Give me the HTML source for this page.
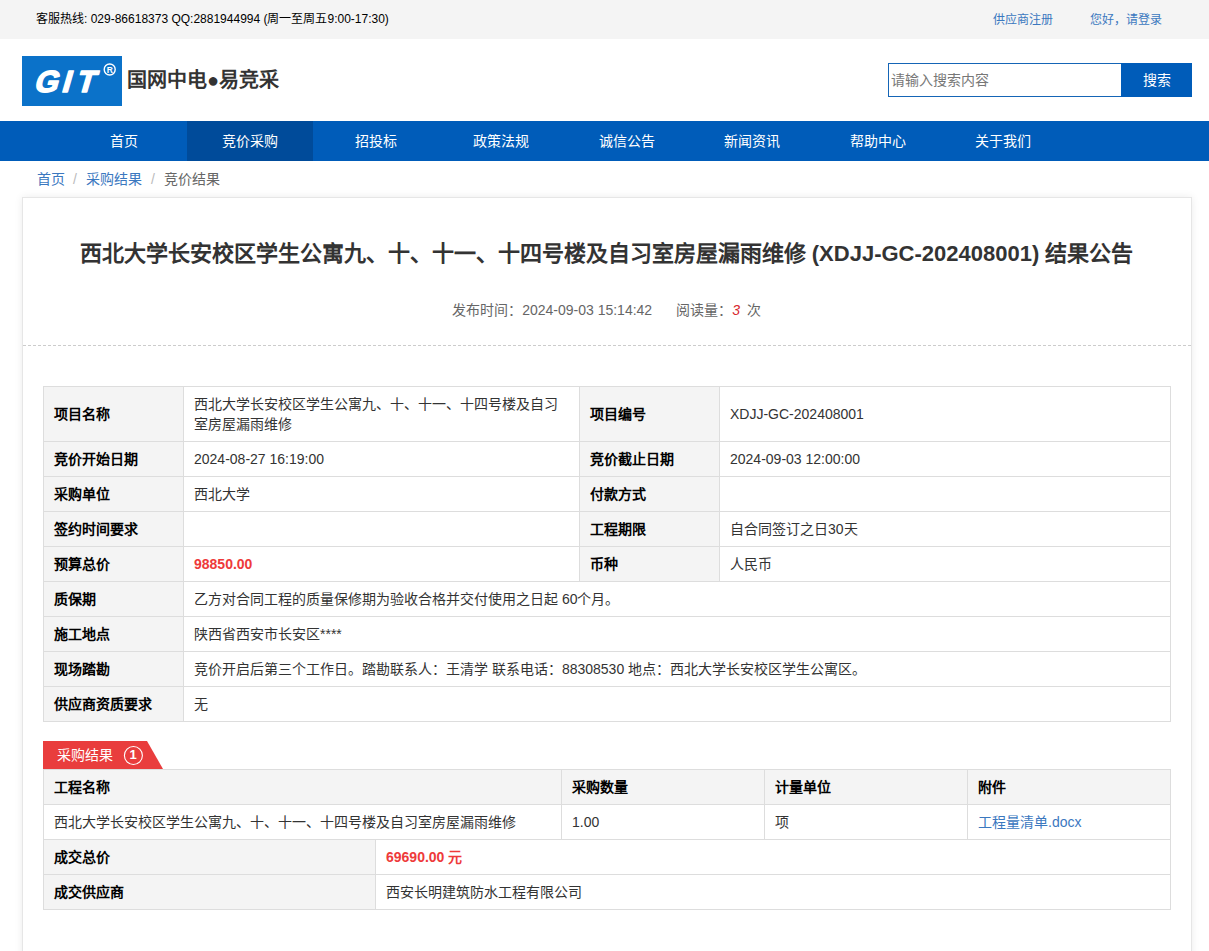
<!DOCTYPE html>
<html lang="zh-CN"><head><meta charset="utf-8">
<style>
*{margin:0;padding:0;box-sizing:border-box}
html,body{width:1209px;height:951px;overflow:hidden;background:#fff}
body{font-family:"Liberation Sans",sans-serif;font-size:14px;color:#333;position:relative}
.abs{position:absolute;white-space:nowrap}
#top{position:absolute;left:0;top:0;width:1209px;height:39px;background:#f4f4f4}
#top .l{left:36px;top:12px;font-size:12px;line-height:14px;color:#000}
#top .r{top:13px;font-size:12px;line-height:14px;color:#3b78bf}
#logo{position:absolute;left:22px;top:56px;width:100px;height:50px;background:#0b72c9}
#brand{left:127px;top:67px;font-size:20px;line-height:26px;font-weight:bold;color:#333}
#search{position:absolute;left:888px;top:63px;width:234px;height:34px;border:1px solid #1565b6;background:#fff}
#search span{position:absolute;left:2px;top:8px;font-size:14px;line-height:16px;color:#777}
#sbtn{position:absolute;left:1121px;top:63px;width:71px;height:34px;background:#005cb9;color:#fff;font-size:14px;line-height:34px;text-align:center}
#nav{position:absolute;left:0;top:121px;width:1209px;height:40px;background:#005cb9}
#nav .it{position:absolute;top:0;height:40px;width:126px;line-height:40px;text-align:center;color:#fff;font-size:14px}
#nav .act{background:#004b9a}
.crumb{top:170px;font-size:14px;line-height:18px}
#crumb a{color:#3b78bf;text-decoration:none}
#crumb .sep{color:#bbb;padding:0 8px}
#box{position:absolute;left:22px;top:197px;width:1170px;height:800px;border:1px solid #e6e6e6;box-shadow:0 0 8px rgba(0,0,0,.08);background:#fff}
#title{position:absolute;left:0;top:240px;width:1213px;text-align:center;font-size:22px;line-height:28px;font-weight:bold;color:#333}
#meta{position:absolute;left:0;top:301px;width:1213px;text-align:center;font-size:14px;line-height:18px;color:#666}
#meta i{color:#d8262c}
#dash{position:absolute;left:23px;top:345px;width:1168px;border-top:1px dashed #ccc}
table{position:absolute;border-collapse:collapse;table-layout:fixed}
td,th{border:1px solid #ddd;padding:0 10px;font-size:14px;line-height:20px;color:#333;text-align:left;vertical-align:middle;font-weight:normal}
td.lb,th{background:#f4f4f4;font-weight:bold;color:#000}
.red{color:#ee3a3a;font-weight:bold}
#tab{position:absolute;left:43px;top:741px;width:120px;height:28px}
</style></head><body>
<div id="top">
  <div class="abs l">客服热线: 029-86618373 QQ:2881944994 (周一至周五9:00-17:30)</div>
  <div class="abs r" style="left:993px">供应商注册</div>
  <div class="abs r" style="left:1090px">您好，请登录</div>
</div>
<div id="logo"><svg width="100" height="50" viewBox="0 0 100 50" style="position:absolute;left:0;top:0"><g transform="translate(0,36) skewX(-16) translate(0,-36)" font-family="Liberation Sans" font-weight="bold" font-size="30.5" fill="#fff" stroke="#fff" stroke-width="1.5" stroke-linejoin="round"><text x="11.3" y="36">G</text><text x="38.8" y="36">I</text><text x="52.9" y="36">T</text></g><circle cx="87.7" cy="13.5" r="5.5" fill="none" stroke="#fff" stroke-width="1.4"/><text x="87.9" y="16.7" text-anchor="middle" font-family="Liberation Sans" font-weight="bold" font-size="8.5" fill="#fff">R</text></svg></div>
<div class="abs" id="brand">国网中电●易竞采</div>
<div id="search"><span>请输入搜索内容</span></div>
<div id="sbtn">搜索</div>
<div id="nav">
  <div class="it" style="left:61px">首页</div>
  <div class="it act" style="left:187px">竞价采购</div>
  <div class="it" style="left:313px">招投标</div>
  <div class="it" style="left:438px">政策法规</div>
  <div class="it" style="left:564px">诚信公告</div>
  <div class="it" style="left:689px">新闻资讯</div>
  <div class="it" style="left:815px">帮助中心</div>
  <div class="it" style="left:940px">关于我们</div>
</div>
<div class="abs crumb" style="left:37px;color:#3b78bf">首页</div><div class="abs crumb" style="left:73px;color:#bbb">/</div><div class="abs crumb" style="left:86px;color:#3b78bf">采购结果</div><div class="abs crumb" style="left:151px;color:#bbb">/</div><div class="abs crumb" style="left:164px;color:#666">竞价结果</div>
<div id="box"></div>
<div class="abs" id="title">西北大学长安校区学生公寓九、十、十一、十四号楼及自习室房屋漏雨维修 (XDJJ-GC-202408001) 结果公告</div>
<div class="abs" id="meta">发布时间：2024-09-03 15:14:42<span style="margin-left:24px">阅读量：</span><i style="margin-right:3px">3</i> 次</div>
<div id="dash"></div>

<table id="t1" style="left:43px;top:386px;width:1127px">
<colgroup><col style="width:140px"><col style="width:396px"><col style="width:140px"><col style="width:451px"></colgroup>
<tr style="height:55px"><td class="lb">项目名称</td><td>西北大学长安校区学生公寓九、十、十一、十四号楼及自习室房屋漏雨维修</td><td class="lb">项目编号</td><td>XDJJ-GC-202408001</td></tr>
<tr style="height:35px"><td class="lb">竞价开始日期</td><td>2024-08-27 16:19:00</td><td class="lb">竞价截止日期</td><td>2024-09-03 12:00:00</td></tr>
<tr style="height:35px"><td class="lb">采购单位</td><td>西北大学</td><td class="lb">付款方式</td><td></td></tr>
<tr style="height:35px"><td class="lb">签约时间要求</td><td></td><td class="lb">工程期限</td><td>自合同签订之日30天</td></tr>
<tr style="height:35px"><td class="lb">预算总价</td><td class="red">98850.00</td><td class="lb">币种</td><td>人民币</td></tr>
<tr style="height:35px"><td class="lb">质保期</td><td colspan="3">乙方对合同工程的质量保修期为验收合格并交付使用之日起 60个月。</td></tr>
<tr style="height:35px"><td class="lb">施工地点</td><td colspan="3">陕西省西安市长安区****</td></tr>
<tr style="height:35px"><td class="lb">现场踏勘</td><td colspan="3">竞价开启后第三个工作日。踏勘联系人：王清学 联系电话：88308530 地点：西北大学长安校区学生公寓区。</td></tr>
<tr style="height:35px"><td class="lb">供应商资质要求</td><td colspan="3">无</td></tr>
</table>

<svg id="tab" width="120" height="28" viewBox="0 0 120 28"><path d="M0 0H104L120 28H0Z" fill="#e93d3d"/><circle cx="90.4" cy="14.5" r="9" fill="none" stroke="#fff" stroke-width="1.1"/></svg>
<div class="abs" style="left:57px;top:746px;font-size:14px;line-height:18px;color:#fff">采购结果</div>
<div class="abs" style="left:129.5px;top:747px;font-size:13px;line-height:16px;font-weight:bold;color:#fff">1</div>

<table id="t2" style="left:43px;top:769px;width:1127px">
<colgroup><col style="width:332px"><col style="width:186px"><col style="width:203px"><col style="width:203px"><col style="width:203px"></colgroup>
<tr style="height:35px"><th colspan="2">工程名称</th><th>采购数量</th><th>计量单位</th><th>附件</th></tr>
<tr style="height:35px"><td colspan="2">西北大学长安校区学生公寓九、十、十一、十四号楼及自习室房屋漏雨维修</td><td>1.00</td><td>项</td><td><a style="color:#3b78bf">工程量清单.docx</a></td></tr>
<tr style="height:35px"><td class="lb">成交总价</td><td colspan="4" class="red">69690.00 元</td></tr>
<tr style="height:35px"><td class="lb">成交供应商</td><td colspan="4">西安长明建筑防水工程有限公司</td></tr>
</table>
</body></html>
